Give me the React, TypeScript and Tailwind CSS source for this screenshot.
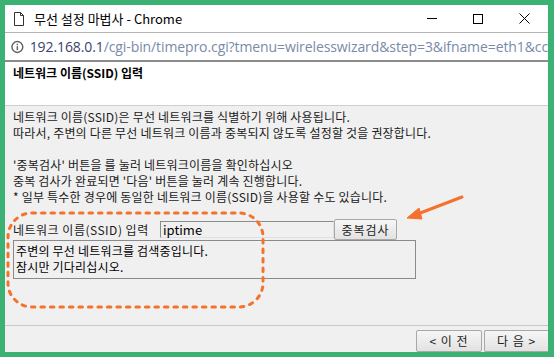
import React from "react";

const KR = "font-['Noto_Sans_CJK_KR','Noto_Sans',sans-serif]";

function DocIcon() {
  return (
    <svg width="12" height="14" viewBox="0 0 12 14" fill="none" stroke="#333" strokeWidth="1">
      <path d="M1.5 0.5h6l3 3v10h-9z" />
      <path d="M7.5 0.5v3h3" />
    </svg>
  );
}

function InfoIcon() {
  return (
    <svg width="14" height="14" viewBox="0 0 14 14" fill="none">
      <circle cx="7" cy="7" r="6" stroke="#5f6368" strokeWidth="1.6" />
      <rect x="6.2" y="6" width="1.6" height="4.4" fill="#5f6368" />
      <rect x="6.2" y="3.4" width="1.6" height="1.6" fill="#5f6368" />
    </svg>
  );
}

function WindowControls() {
  return (
    <div className="flex items-center h-full">
      <div className="w-[46px] flex justify-center">
        <div className="w-[10px] h-px bg-black" />
      </div>
      <div className="w-[46px] flex justify-center">
        <div className="w-[10px] h-[10px] border border-black" />
      </div>
      <div className="w-[46px] flex justify-center">
        <svg width="11" height="11" viewBox="0 0 11 11" stroke="#000" strokeWidth="1">
          <path d="M0.5 0.5l10 10M10.5 0.5l-10 10" />
        </svg>
      </div>
    </div>
  );
}

export default function App() {
  return (
    <div className="w-[554px] h-[357px] bg-[#3bb273] pt-[5px] pl-[5px] pr-[6px] pb-[5px] overflow-hidden">
      <div className={`relative w-[543px] h-[347px] flex flex-col bg-[#f0f0f0] overflow-hidden ${KR}`}>
        {/* title bar */}
        <div className="h-[28px] shrink-0 bg-white border-b border-[#b4b4b4] flex items-center justify-between">
          <div className="flex items-center pl-[8px] gap-[9px]">
            <DocIcon />
            <span className="text-[13px] text-black leading-none">무선 설정 마법사 - Chrome</span>
          </div>
          <div className="h-full pr-[1px]">
            <WindowControls />
          </div>
        </div>
        {/* address bar */}
        <div className="h-[29px] shrink-0 bg-white border-b-2 border-[#8a8a8a] flex items-center pl-[6px] gap-[6px] whitespace-nowrap overflow-hidden">
          <InfoIcon />
          <span className="text-[14px] leading-none font-['Open_Sans',sans-serif] tracking-[-0.1px]">
            <span className="text-[#3a3f6e]">192.168.0.1</span>
            <span className="text-[#7a8aa8]">/cgi-bin/timepro.cgi?tmenu=wirelesswizard&amp;step=3&amp;ifname=eth1&amp;cc</span>
          </span>
        </div>
        {/* header */}
        <div className="h-[44px] shrink-0 bg-white border-b border-[#cfcfcf] pl-[8px] pt-[3px]">
          <div className="text-[12px] font-bold text-black leading-[16px]">네트워크 이름(SSID) 입력</div>
        </div>
        {/* body */}
        <div className="flex-1 pl-[8px] pt-[3px] text-[12px] leading-[16px] text-[#1a1a1a] tracking-[0.2px]">
          <p>네트워크 이름(SSID)은 무선 네트워크를 식별하기 위해 사용됩니다.</p>
          <p>따라서, 주변의 다른 무선 네트워크 이름과 중복되지 않도록 설정할 것을 권장합니다.</p>
          <p className="h-[16px]" />
          <p>'중복검사' 버튼을 를 눌러 네트워크이름을 확인하십시오</p>
          <p>중복 검사가 완료되면 '다음' 버튼을 눌러 계속 진행합니다.</p>
          <p>* 일부 특수한 경우에 동일한 네트워크 이름(SSID)을 사용할 수도 있습니다.</p>
          <div className="mt-[14px] flex items-center h-[21px]">
            <span className="w-[147px] text-[12px] tracking-[0.5px]">네트워크 이름(SSID) 입력</span>
            <div className="w-[174px] h-[17px] bg-[#f0f0f0] border-t border-l border-[#8c8c8c] border-r border-r-[#e0e0e0] border-b border-b-[#e0e0e0] flex items-center pl-[2px] text-[13px] text-black tracking-normal">
              iptime
            </div>
            <button className="w-[63px] h-[21px] border border-[#a8a8a8] rounded-[2px] bg-gradient-to-b from-[#f6f6f6] to-[#e2e2e2] text-[12px] text-[#222] tracking-[1px]">
              중복검사
            </button>
          </div>
          <div className="w-[403px] h-[39px] border border-[#8a8a8a] pl-[2px] pt-[2px] text-[12px] leading-[16px] text-black">
            <p>주변의 무선 네트워크를 검색중입니다.</p>
            <p>잠시만 기다리십시오.</p>
          </div>
        </div>
        {/* footer */}
        <div className="h-[27px] shrink-0 border-t border-[#c8c8c8] flex justify-end items-start pt-[4px] gap-[2px]">
          <button className="w-[66px] h-[22px] border border-[#a8a8a8] rounded-[2px] bg-gradient-to-b from-[#f6f6f6] to-[#e2e2e2] text-[12px] text-[#222] tracking-[1px]">
            &lt; 이 전
          </button>
          <button className="w-[64px] h-[22px] border border-[#a8a8a8] border-r-0 rounded-l-[2px] bg-gradient-to-b from-[#f6f6f6] to-[#e2e2e2] text-[12px] text-[#222] tracking-[1px]">
            다 음 &gt;
          </button>
        </div>

        {/* annotation overlay */}
        <svg className="absolute left-0 top-0 pointer-events-none" width="543" height="347" viewBox="0 0 543 347">
          <rect x="3" y="208" width="255" height="94" rx="24" ry="24" fill="none" stroke="#f4722b" strokeWidth="3" strokeDasharray="3.5 6" strokeLinecap="round" />
          <path d="M457 192 L410 210" stroke="#f4722b" strokeWidth="3" strokeLinecap="round" />
          <path d="M402 213 L414 203 L417 214 Z" fill="#f4722b" stroke="#f4722b" strokeWidth="1" strokeLinejoin="round" />
        </svg>
      </div>
    </div>
  );
}
